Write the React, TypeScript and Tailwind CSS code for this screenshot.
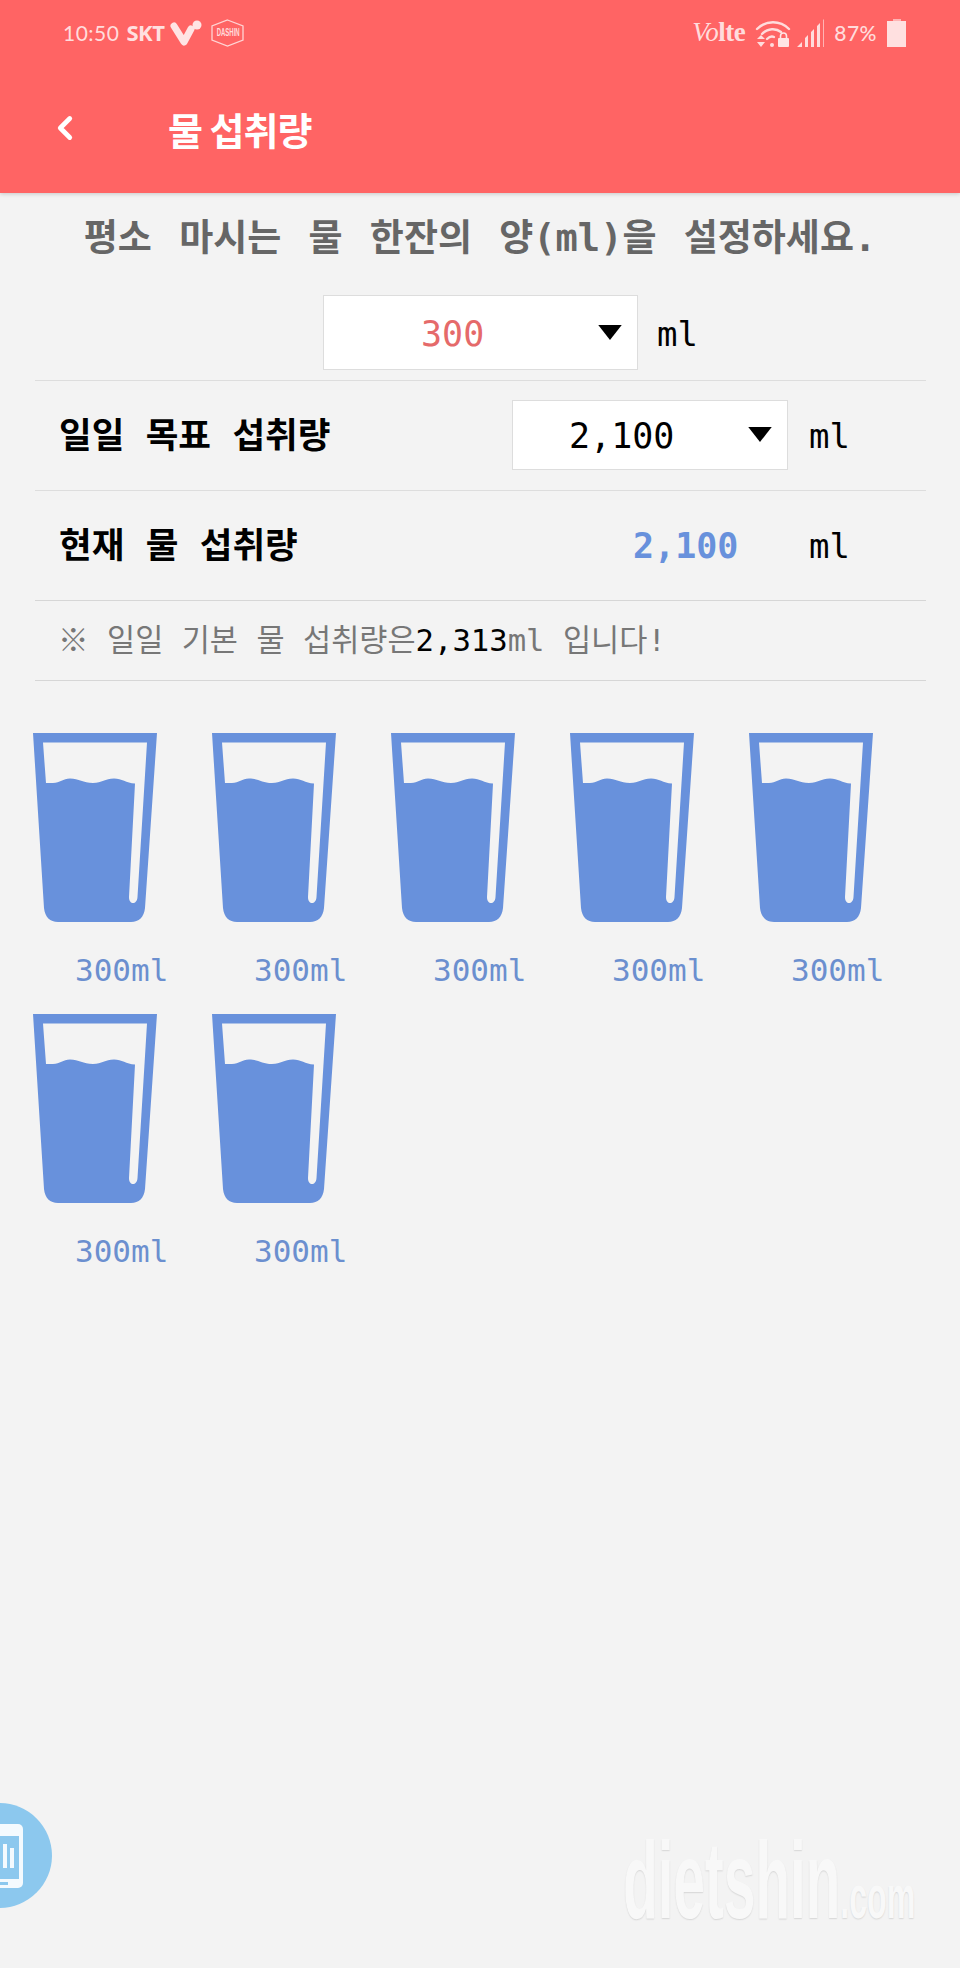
import { ChevronLeft } from "lucide-react";

const MONO = "font-['DejaVu_Sans_Mono','Noto_Sans_CJK_KR',monospace]";

function Glass() {
  return (
    <svg viewBox="0 0 124 189" className="w-[124px] h-[189px]">
      <path
        fill="#6891dc"
        fillRule="evenodd"
        d="M0 0H124L112 175C111 184 106 189 98 189H25C17 189 12 184 11 175L0 0ZM10 9.500L13 50H20C27 50 30 45.500 37 45.500C46 45.500 50 50 60 50C69 50 72 45.500 81 45.500C89 45.500 93 50 102 50.500L96 164C96 172 104 172 104.500 164L114 9.500H10Z"
      />
    </svg>
  );
}

function Caret() {
  return (
    <svg viewBox="0 0 22 15" className="w-[24px] h-[16px]">
      <path d="M0 0H22L11 14Z" fill="#000" />
    </svg>
  );
}

function StatusBar() {
  return (
    <div className="h-[65px] flex items-center justify-between pl-[63px] pr-[54px] text-[#ffdcdc]">
      <div className="flex items-center">
        <span className="font-['Lato',sans-serif] text-[21px] tracking-[0.5px]">10:50</span>
        <span className="ml-[7px] font-['Noto_Sans',sans-serif] font-bold text-[22px] text-[#ffe0e0] tracking-[-0.5px]">SKT</span>
        <svg viewBox="0 0 32 28" className="ml-[6px] w-[32px] h-[28px]">
          <path d="M4 7L14 23L21 10" fill="none" stroke="#ffe4e4" strokeWidth="7" strokeLinecap="round" strokeLinejoin="round" />
          <circle cx="27" cy="6" r="4.500" fill="#ffe4e4" />
        </svg>
        <div className="ml-[9px] relative w-[33px] h-[28px] flex items-center justify-center">
          <svg viewBox="0 0 33 28" className="absolute inset-0">
            <path d="M16.500 1L32 7V21L16.500 27L1 21V7Z" fill="none" stroke="#ffd4d4" strokeWidth="1.300" />
          </svg>
          <span className="relative font-['Liberation_Sans',sans-serif] text-[10px] font-bold scale-x-[0.6]">DASHIN</span>
        </div>
      </div>
      <div className="flex items-center">
        <span className="font-['Liberation_Serif',serif] text-[27px] tracking-[-0.5px]">
          <i>Vo</i>
          <b>lte</b>
        </span>
        <svg viewBox="0 0 36 30" className="ml-[10px] w-[36px] h-[30px]">
          <g fill="none" stroke="#ffdcdc" strokeWidth="2.400" strokeLinecap="round">
            <path d="M2 11C11 2 25 2 34 11" />
            <path d="M7 16C13 10 21 10 26 14" />
            <path d="M12 21C14 19 17 18 19 19" />
          </g>
          <circle cx="17" cy="27" r="2" fill="#ffdcdc" />
          <path d="M2 21H10L6 17ZM2 24H10L6 29Z" fill="#ffdcdc" />
          <rect x="23" y="20" width="11" height="9" rx="1" fill="#ffe4e4" />
          <path d="M25.500 20V18C25.500 14 31.500 14 31.500 18V20" fill="none" stroke="#ffe4e4" strokeWidth="1.600" />
        </svg>
        <svg viewBox="0 0 30 30" className="ml-[5px] w-[30px] h-[30px]">
          <path d="M1 29L6 24V29ZM9 29V20L12 17V29ZM15 29V14L18 11V29ZM21 29V8L24 5V29Z" fill="#ffdcdc" />
          <path d="M27 29V2L28 1V29Z" fill="#ffb4b4" />
        </svg>
        <span className="ml-[8px] font-['Lato',sans-serif] font-medium text-[21px] tracking-[0.5px]">87%</span>
        <div className="ml-[10px] flex flex-col items-center">
          <div className="w-[8px] h-[2px] bg-[#ffb4b4]" />
          <div className="w-[19px] h-[26px] bg-[#ffe0e0]" />
        </div>
      </div>
    </div>
  );
}

export default function App() {
  const glasses = [0, 1, 2, 3, 4, 5, 6];

  return (
    <div className={`relative w-[960px] h-[1968px] overflow-hidden bg-[#f3f3f3] ${MONO}`}>
      <header className="h-[193px] bg-[#ff6464] shadow-[0_1px_4px_rgba(0,0,0,0.18)]">
        <StatusBar />
        <div className="mt-[31px] h-[64px] flex items-center pl-[46px]">
          <ChevronLeft className="w-[38px] h-[38px] text-white" strokeWidth={3} />
          <h1 className="ml-[84px] font-['Noto_Sans_CJK_KR',sans-serif] font-bold text-[38px] text-white tracking-[-1px]">
            물 섭취량
          </h1>
        </div>
      </header>

      <p className="h-[102px] pt-[21px] text-center font-bold text-[37px] leading-[50px] text-[#666666] whitespace-nowrap [word-spacing:5px]">
        평소 마시는 물 한잔의 양(ml)을 설정하세요.
      </p>

      <div className="ml-[35px] mr-[34px] flex items-start h-[86px] border-b border-[#dddddd] pl-[288px]">
        <div className="w-[315px] h-[75px] flex items-center justify-between bg-white border border-[#dddddd] pl-[97px] pr-[15px]">
          <span className="pt-[3px] text-[35px] text-[#e56a6a]">300</span>
          <Caret />
        </div>
        <span className="ml-[19px] h-[75px] pt-[3px] flex items-center text-[34px] text-black">ml</span>
      </div>

      <div className="ml-[35px] mr-[34px] h-[110px] flex items-center border-b border-[#dddddd] pl-[24px] pb-[2px]">
        <span className="w-[453px] pt-[3px] font-bold text-[35.500px] text-black">일일 목표 섭취량</span>
        <div className="w-[276px] h-[70px] flex items-center justify-between bg-white border border-[#dddddd] pl-[56px] pr-[15px]">
          <span className="pt-[4px] text-[35px] text-black">2,100</span>
          <Caret />
        </div>
        <span className="ml-[21px] pt-[4px] text-[34px] text-black">ml</span>
      </div>

      <div className="ml-[35px] mr-[34px] h-[110px] flex items-center border-b border-[#d6d6d6] pl-[24px]">
        <span className="w-[574px] pt-[1px] font-bold text-[35.500px] text-black">현재 물 섭취량</span>
        <span className="w-[176px] pt-[1px] font-bold text-[35px] text-[#6891dc]">2,100</span>
        <span className="pt-[1px] text-[34px] text-black">ml</span>
      </div>

      <p className="ml-[35px] mr-[34px] h-[80px] flex items-center border-b border-[#d6d6d6] pl-[23px] pt-[1px] text-[30.600px] text-[#777777] whitespace-pre">
        ※ 일일 기본 물 섭취량은<span className="text-black">2,313</span>ml 입니다!
      </p>

      <div className="mt-[52px] ml-[33px] w-[895px] grid grid-cols-5 auto-rows-[281px]">
        {glasses.map((g) => (
          <div key={g} className="flex flex-col items-start">
            <Glass />
            <span className="mt-[30px] ml-[42px] text-[31px] leading-[36px] text-[#6b8fcf]">300ml</span>
          </div>
        ))}
      </div>

      {/* floating report button, half off screen */}
      <div className="absolute left-[-53px] top-[1803px] w-[105px] h-[105px] rounded-full bg-[#8cc8ee] flex items-center justify-center">
        <svg viewBox="0 0 46 64" className="w-[46px] h-[64px]">
          <rect width="46" height="64" rx="5" fill="#f4fafe" />
          <rect x="4" y="12" width="38" height="43" fill="#8cc8ee" />
          <rect x="16" y="28" width="4" height="16" fill="#f4fafe" />
          <rect x="26" y="20" width="4" height="24" fill="#f4fafe" />
          <rect x="33" y="24" width="4" height="20" fill="#f4fafe" />
          <rect x="15" y="58" width="16" height="3" fill="#8cc8ee" />
        </svg>
      </div>

      {/* watermark */}
      <div className="absolute left-[623px] top-[1830px] flex items-baseline text-[#f8f8f8] font-['Liberation_Sans',sans-serif] font-bold [text-shadow:0_1px_2px_rgba(0,0,0,0.12)] origin-left scale-x-[0.52] whitespace-nowrap">
        <span className="text-[110px] leading-[100px] tracking-[-0.5px]">dietshin</span>
        <span className="text-[62px] leading-[100px]">.com</span>
      </div>
    </div>
  );
}
